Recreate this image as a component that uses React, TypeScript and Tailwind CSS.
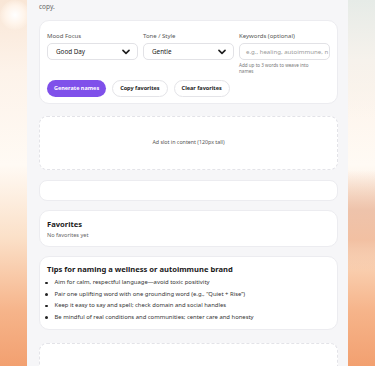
import React from "react";

function Chevron() {
  return (
    <svg width="8" height="6" viewBox="0 0 10 7" className="shrink-0">
      <path d="M1.2 1.4 L5 5.2 L8.8 1.4" fill="none" stroke="#1f1f1f" strokeWidth="2" strokeLinecap="round" strokeLinejoin="round" />
    </svg>
  );
}

function Select({ value }: { value: string }) {
  return (
    <div className="flex h-[17px] items-center justify-between rounded-[5px] border border-[#e2e2e6] bg-white pl-[8px] pr-[7px] text-[6.3px] text-[#222]">
      <span>{value}</span>
      <Chevron />
    </div>
  );
}

export default function App() {
  const tips = [
    "Aim for calm, respectful language—avoid toxic positivity",
    "Pair one uplifting word with one grounding word (e.g., \u201cQuiet + Rise\u201d)",
    "Keep it easy to say and spell; check domain and social handles",
    "Be mindful of real conditions and communities; center care and honesty",
  ];
  return (
    <div
      className="relative h-[366px] w-[375px] overflow-hidden bg-[linear-gradient(180deg,#f9e6d6_0%,#fdf3ea_20%,#fffaf4_45%,#fbe0c8_65%,#f6b48a_85%,#f2a070_100%)]"
      style={{ fontFamily: '"Noto Sans", "Open Sans", sans-serif' }}
    >
      <div className="absolute left-0 top-0 h-[30px] w-[30px] rounded-full bg-[radial-gradient(circle,#ffffff_0%,#fff4ea_45%,transparent_75%)]" />
      <div className="absolute right-0 top-0 h-[120px] w-[30px] bg-[linear-gradient(180deg,#e6ebe7_0%,#f6f2ec_50%,transparent_100%)]" />
      <div className="absolute right-0 top-[170px] h-[100px] w-[28px] bg-[linear-gradient(180deg,transparent_0%,#eec3ab_40%,#f2c0a2_70%,transparent_100%)]" />
      <div className="relative ml-[27px] h-full w-[321px] bg-[#f6f6f8] pl-[12px] pr-[10px]">
        <div className="pt-[2px] text-[6.5px] leading-[9px] text-[#666]">copy.</div>

        <div className="mt-[9px] rounded-[10px] border border-[#ececf0] bg-white px-[7px] pb-[6px] pt-[11px]">
          <div className="grid grid-cols-3 gap-[5px]">
            <div className="flex flex-col">
              <div className="mb-[2px] text-[6px] leading-[9px] text-[#555]">Mood Focus</div>
              <Select value="Good Day" />
            </div>
            <div className="flex flex-col">
              <div className="mb-[2px] text-[6px] leading-[9px] text-[#555]">Tone / Style</div>
              <Select value="Gentle" />
            </div>
            <div className="flex flex-col">
              <div className="mb-[2px] text-[6px] leading-[9px] text-[#555]">Keywords (optional)</div>
              <div className="flex h-[17px] items-center overflow-hidden whitespace-nowrap rounded-[5px] border border-[#e2e2e6] bg-white pl-[6px] text-[6.1px] text-[#999]">
                e.g., healing, autoimmune, n
              </div>
              <div className="mt-[2px] w-[82px] text-[4.6px] leading-[6px] text-[#777]">
                Add up to 3 words to weave into names
              </div>
            </div>
          </div>
          <div className="mt-[6px] flex gap-[6px]">
            <div className="flex h-[17px] items-center rounded-full bg-[#7f50ea] px-[7px] text-[5.5px] font-bold text-white">
              Generate names
            </div>
            <div className="flex h-[17px] items-center rounded-full border border-[#e4e4e8] bg-white px-[7px] text-[5.5px] font-bold text-[#222]">
              Copy favorites
            </div>
            <div className="flex h-[17px] items-center rounded-full border border-[#e4e4e8] bg-white px-[7px] text-[5.5px] font-bold text-[#222]">
              Clear favorites
            </div>
          </div>
        </div>

        <div className="mt-[12px] flex h-[54px] items-center justify-center rounded-[8px] border border-dashed border-[#e3e3e8] bg-white text-[5.3px] text-[#555]">
          Ad slot in content (120px tall)
        </div>

        <div className="mt-[10px] h-[21px] rounded-[8px] border border-[#ececf0] bg-white" />

        <div className="mt-[9px] rounded-[10px] border border-[#ececf0] bg-white px-[7px] pb-[6px] pt-[7px]">
          <div className="text-[7.6px] font-bold leading-[12px] text-[#1a1a1a]">Favorites</div>
          <div className="mt-[1px] text-[5.6px] leading-[9px] text-[#666]">No favorites yet</div>
        </div>

        <div className="mt-[9px] rounded-[10px] border border-[#ececf0] bg-white px-[7px] pb-[6px] pt-[6px]">
          <div className="text-[7.6px] font-bold leading-[12px] text-[#1a1a1a]">Tips for naming a wellness or autoimmune brand</div>
          <ul className="mt-[2px] flex flex-col">
            {tips.map((t) => (
              <li key={t} className="flex items-center text-[5.9px] leading-[11.5px] text-[#333]">
                <span className="mr-[7px] ml-[-2px] h-[2.5px] w-[2.5px] shrink-0 rounded-full bg-[#222]" />
                {t}
              </li>
            ))}
          </ul>
        </div>

        <div className="mt-[13px] h-[60px] rounded-[8px] border border-dashed border-[#e3e3e8] bg-white" />
      </div>
    </div>
  );
}
